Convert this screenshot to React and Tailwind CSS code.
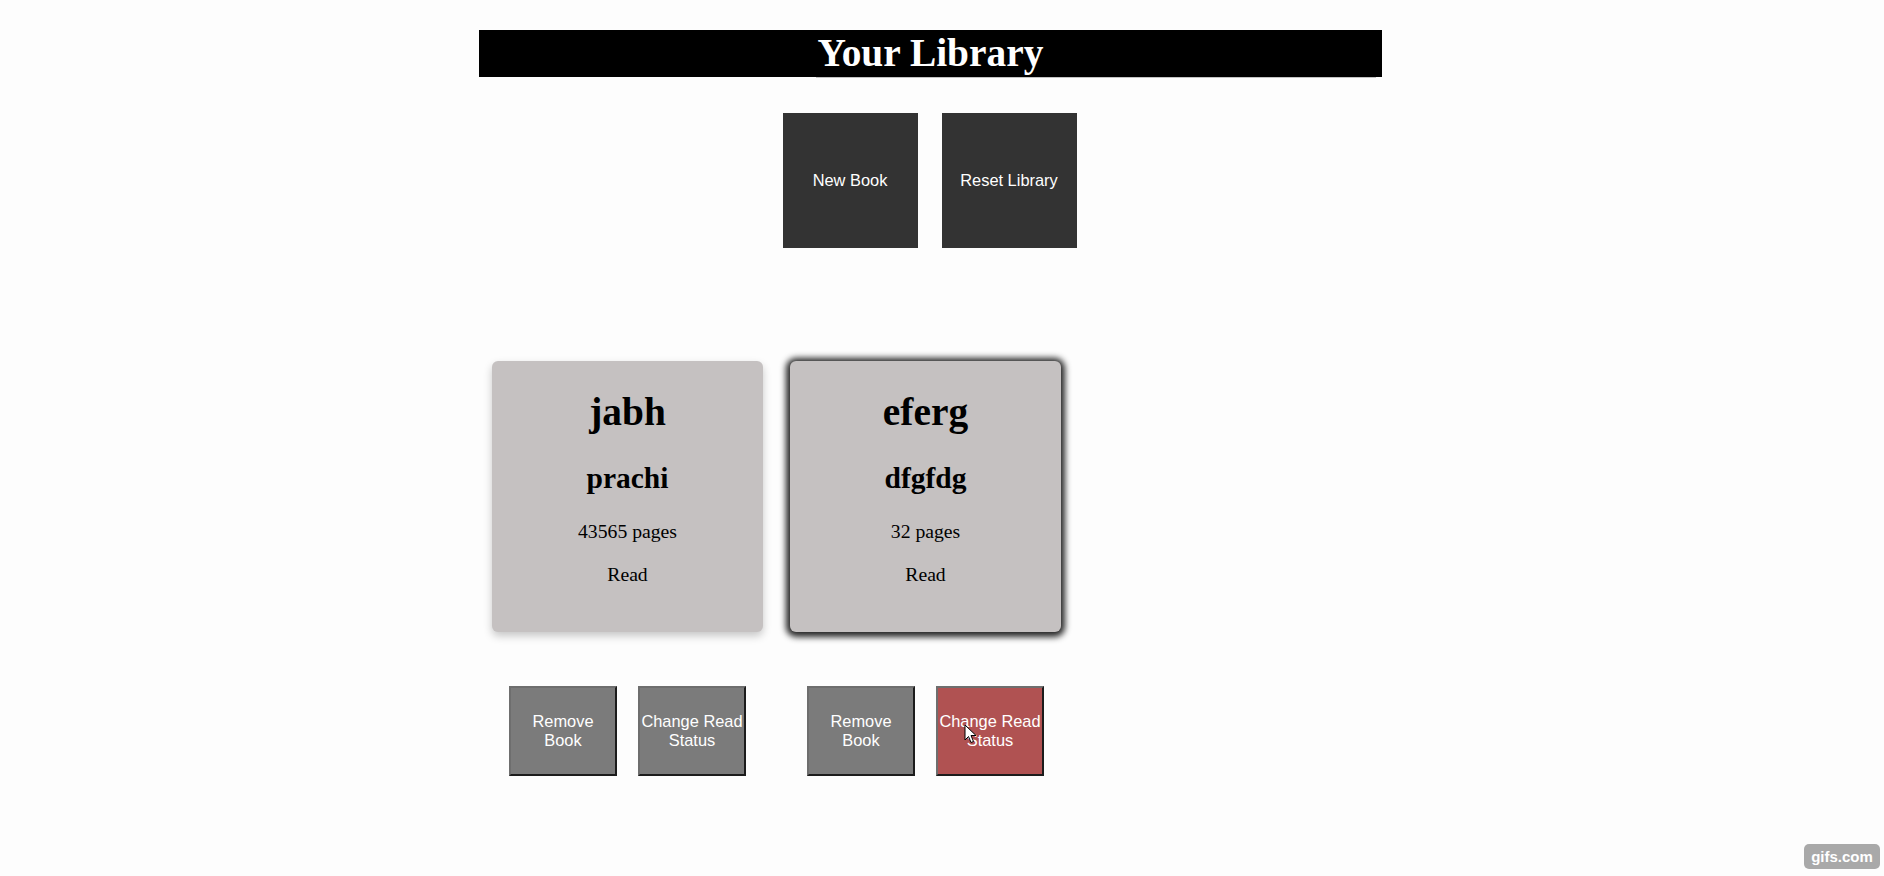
import React from "react";

const books = [
  { title: "jabh", author: "prachi", pages: 43565, read: true, hover: false },
  { title: "eferg", author: "dfgfdg", pages: 32, read: true, hover: true },
];

const serif = "font-['Liberation_Serif','Times_New_Roman',serif]";
const sans = "font-['Liberation_Sans',Arial,sans-serif]";

const SmallButton = ({ lines, red }) => (
  <button
    className={`w-[108px] h-[90px] border-2 border-t-[#6e6e6e] border-l-[#6e6e6e] border-r-[#1c1c1c] border-b-[#1c1c1c] text-white text-[16.4px] leading-[19px] whitespace-nowrap flex flex-col items-center justify-center ${sans} ${
      red ? "bg-[#b05252]" : "bg-[#7b7b7b]"
    }`}
  >
    {lines.map((l) => (
      <span key={l}>{l}</span>
    ))}
  </button>
);

const BookCard = ({ book }) => (
  <div className="w-[271px] flex flex-col items-center">
    <div
      className={`w-[271px] h-[271px] rounded-[6px] bg-[#c5c1c1] flex flex-col items-center pt-[29px] text-black ${serif} ${
        book.hover
          ? "shadow-[0_1px_6px_4px_rgba(0,0,0,0.85)]"
          : "shadow-[0_4px_9px_rgba(0,0,0,0.22)]"
      }`}
    >
      <h1 className="text-[39.4px] leading-[45px] font-bold">{book.title}</h1>
      <h2 className="mt-[26px] text-[29.5px] leading-[35px] font-bold">{book.author}</h2>
      <p className="mt-[24px] text-[19.7px] leading-[23px]">{book.pages} pages</p>
      <p className="mt-[20px] text-[19.7px] leading-[23px]">{book.read ? "Read" : "Not Read"}</p>
    </div>
    <div className="mt-[54px] flex gap-[21px] justify-center">
      <SmallButton lines={["Remove", "Book"]} />
      <div className="relative">
        <SmallButton lines={["Change Read", "Status"]} red={book.hover} />
        {book.hover && (
          // mouse pointer captured in the recording
          <svg
            className="absolute left-[28px] top-[38px]"
            width="13"
            height="21"
            viewBox="0 0 13 21"
          >
            <path
              d="M1 1 L1 16 L4.5 12.5 L7 18.5 L9.5 17.5 L7 11.5 L12 11.5 Z"
              fill="white"
              stroke="black"
              strokeWidth="1"
              strokeLinejoin="round"
            />
          </svg>
        )}
      </div>
    </div>
  </div>
);

const App = () => {
  return (
    <div className="relative min-h-screen w-full bg-[#fdfdfd] overflow-hidden">
      <div className="ml-[479px] w-[903px] pt-[30px]">
        {/* Header */}
        <div className="h-[47px] bg-black text-center">
          <h1 className={`text-white text-[39.4px] leading-[47px] font-bold ${serif}`}>
            Your Library
          </h1>
        </div>
        <div className="h-px ml-[337px] w-[560px] bg-[#c2c2c2]" />

        {/* Top buttons */}
        <div className="mt-[35px] flex justify-center gap-[24px] pr-[2px]">
          <button className={`w-[135px] h-[135px] bg-[#333333] text-white text-[16.4px] ${sans}`}>
            New Book
          </button>
          <button className={`w-[135px] h-[135px] bg-[#333333] text-white text-[16.4px] ${sans}`}>
            Reset Library
          </button>
        </div>

        {/* Books */}
        <div className="mt-[113px] pl-[13px] flex gap-[27px]">
          {books.map((b) => (
            <BookCard key={b.title} book={b} />
          ))}
        </div>
      </div>

      {/* recorder watermark */}
      <div
        className={`absolute right-[4px] bottom-[7px] w-[76px] h-[25px] rounded-[5px] bg-[#a9a9a9] text-white font-bold text-[15px] leading-[25px] text-center ${sans}`}
      >
        gifs.com
      </div>
    </div>
  );
};

export default App;
